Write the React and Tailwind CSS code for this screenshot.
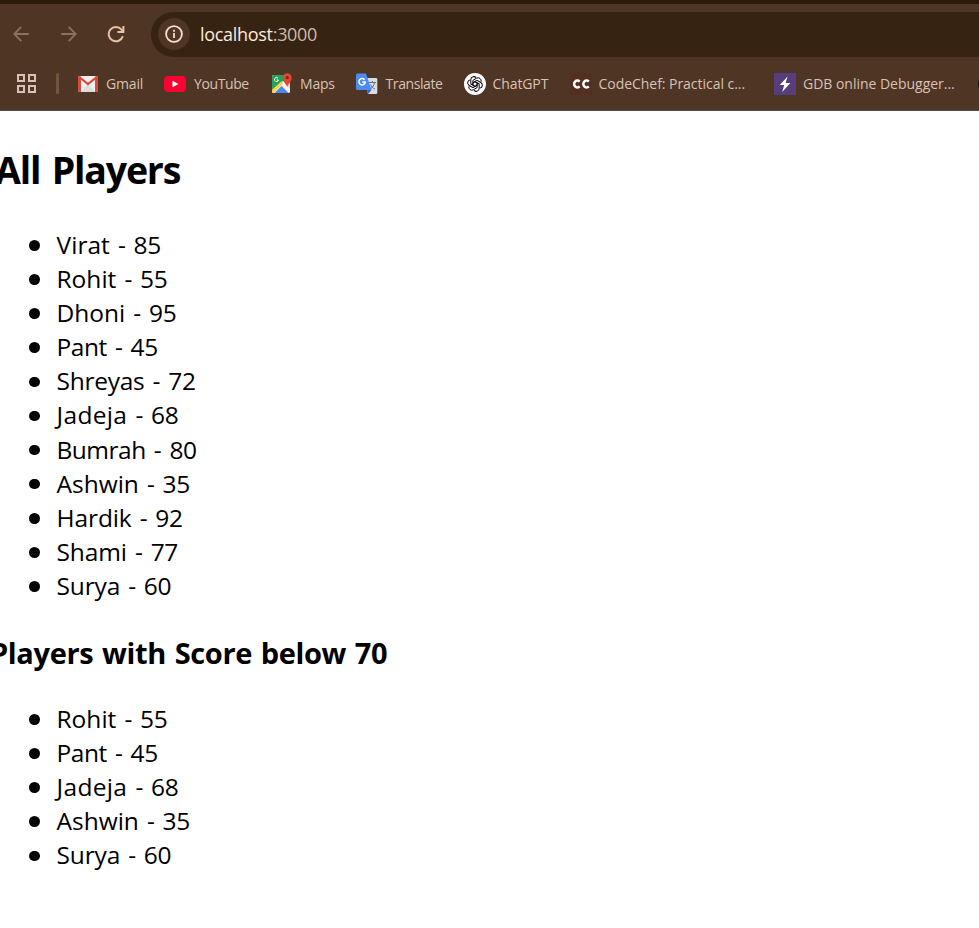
import React from "react";

const allPlayers = [
  ["Virat", 85, "tracking-[0.05px]"],
  ["Rohit", 55, "tracking-[0px]"],
  ["Dhoni", 95, "tracking-[0px]"],
  ["Pant", 45, "tracking-[-0.45px]"],
  ["Shreyas", 72, "tracking-[-0.25px]"],
  ["Jadeja", 68, "tracking-[0.35px]"],
  ["Bumrah", 80, "tracking-[-0.5px]"],
  ["Ashwin", 35, "tracking-[0px]"],
  ["Hardik", 92, "tracking-[-0.1px]"],
  ["Shami", 77, "tracking-[-0.1px]"],
  ["Surya", 60, "tracking-[-0.15px]"],
];

function PlayerList({ players }) {
  return (
    <ul>
      {players.map(([name, score, tracking]) => (
        <li key={name} className="flex h-[34.13px] items-center pl-[29px]">
          <span className="mt-px size-[10.5px] shrink-0 rounded-full bg-black" />
          <span className="ml-[17px] whitespace-pre text-[24.5px] leading-[34px] tracking-[-0.3px] [word-spacing:2px]">
            <span className={tracking}>{name}</span>
            {` - ${score}`}
          </span>
        </li>
      ))}
    </ul>
  );
}

function ArrowIcon({ flip }) {
  return (
    <svg className={`mb-px h-4 w-4 shrink-0 ${flip ? "-scale-x-100" : ""}`} viewBox="0 0 16 16" fill="none" stroke="#8c7161" strokeWidth="1.8">
      <path d="M15.8 8H1.5M8.3 .9L1.2 8l7.1 7.1" />
    </svg>
  );
}

function ReloadIcon() {
  return (
    <svg className="mb-px h-[18px] w-[18px] shrink-0" viewBox="0 0 18 18" fill="none" stroke="#e8c3a3" strokeWidth="2">
      <path d="M15.8 11.2A7.2 7.2 0 1 1 14.5 4.6L16 6.2" />
      <path d="M16.4 1v6h-6" />
    </svg>
  );
}

function InfoIcon() {
  return (
    <svg className="h-[18px] w-[18px]" viewBox="0 0 18 18" fill="none" stroke="#f6dfcf" strokeWidth="1.8">
      <circle cx="9" cy="9" r="7.9" />
      <path d="M9 8v5M9 4.7v2" />
    </svg>
  );
}

function AppsIcon() {
  return (
    <svg className="mb-[2px] h-[19px] w-[19px] shrink-0" viewBox="0 0 19 19" fill="none" stroke="#d8c2b5" strokeWidth="2">
      <path d="M1 1h6v6H1zM12 1h6v6h-6zM1 12h6v6H1zM12 12h6v6h-6z" />
    </svg>
  );
}

function GmailIcon() {
  return (
    <svg className="h-4 w-5 shrink-0" viewBox="0 0 20 16">
      <rect width="20" height="16" rx="1.5" fill="#efefef" />
      <path d="M3 16l7-8 7 8z" fill="#dcdcdc" />
      <path d="M0 1.5A1.5 1.5 0 0 1 1.5 0L3 1v15H1.5A1.5 1.5 0 0 1 0 14.5zM20 1.5A1.5 1.5 0 0 0 18.5 0L17 1v15h1.5a1.5 1.5 0 0 0 1.5-1.5z" fill="#d54b3d" />
      <path d="M1.2 1L10 8l8.8-7" fill="none" stroke="#d9483b" strokeWidth="2.2" />
    </svg>
  );
}

function YouTubeIcon() {
  return (
    <svg className="h-4 w-[22px] shrink-0" viewBox="0 0 22 16">
      <rect width="22" height="16" rx="4" fill="#ff0033" />
      <path d="M8.5 4.8v6.4l6-3.2z" fill="#fff" />
    </svg>
  );
}

function MapsIcon() {
  return (
    <svg className="mb-px h-[21px] w-5 shrink-0" viewBox="0 0 20 21">
      <rect y="2" width="18" height="18" rx="1.5" fill="#e8eaec" />
      <path d="M0 3.5A1.5 1.5 0 0 1 1.5 2H12v6L0 18z" fill="#25a35a" />
      <path d="M0 18L11 8l7 8v3L9 10.5 1 20z" fill="#f5f5f5" />
      <path d="M0 16.8L9.4 8.5l1.7 1.7L1.6 20A1.5 1.5 0 0 1 0 18.5z" fill="#fdd446" />
      <path d="M2.7 20l6.8-7 7 7z" fill="#4b87f3" />
      <path d="M12.5 9l5.5 7V8z" fill="#d4d7da" />
      <path d="M5.9 5.2A2 2 0 1 0 6.4 7H4.7" fill="none" stroke="#fff" strokeWidth="1" />
      <path d="M15.2 14.5c-.5-3.5-4.5-5.4-4.5-9.7a4.5 4.5 0 0 1 9 0c0 4.3-4 6.2-4.5 9.7z" fill="#e34537" />
      <circle cx="15.2" cy="4.7" r="1.6" fill="#84251f" />
    </svg>
  );
}

function TranslateIcon() {
  return (
    <svg className="h-[22px] w-[22px] shrink-0" viewBox="0 0 22 22">
      <path d="M8 5h12a1.3 1.3 0 0 1 1.3 1.3v13.4A1.3 1.3 0 0 1 20 21h-8z" fill="#dadcdf" />
      <path d="M11 17h4.5L12 21z" fill="#3662c8" />
      <path d="M1.5.5H10L15.5 17h-14A1.5 1.5 0 0 1 0 15.5V2A1.5 1.5 0 0 1 1.5.5z" fill="#4c8bf5" />
      <path d="M8.6 6.7A3.2 3.2 0 1 0 9.3 9H6.2" fill="none" stroke="#fff" strokeWidth="1.5" />
      <path d="M13 9.5h7M16.3 8v1.5M18.5 9.5c-.5 3-2 5-4 6.5M14.5 11.5c.8 2 2.3 3.5 4.5 4.7" fill="none" stroke="#627078" />
    </svg>
  );
}

function ChatGptIcon() {
  return (
    <svg className="h-[22px] w-[22px] shrink-0" viewBox="0 0 22 22">
      <circle cx="11" cy="11" r="11" fill="#fff" />
      <g fill="none" stroke="#000" strokeWidth="1" strokeLinejoin="round">
        {[0, 60, 120, 180, 240, 300].map((angle) => (
          <path key={angle} transform={`rotate(${angle} 11 11)`} d="M8.9 12.2V7.4L12.6 5.2a3.1 3.1 0 0 1 4.5 3.5M8.9 9.8L11 8.6" />
        ))}
      </g>
    </svg>
  );
}

function CodeChefIcon() {
  return (
    <span className="flex h-[22px] w-[22px] shrink-0 items-center justify-center bg-[#532f20]">
      <svg className="mr-px h-2.5 w-[18px]" viewBox="0 0 18 10" fill="none" stroke="#fff" strokeWidth="2.5">
        <path d="M7.6 2.6A3.2 3.4 0 1 0 7.6 7.4M16.8 2.6A3.2 3.4 0 1 0 16.8 7.4" />
      </svg>
    </span>
  );
}

function GdbIcon() {
  return (
    <svg className="h-[22px] w-[22px] shrink-0" viewBox="0 0 22 22">
      <rect width="22" height="22" fill="#563d7c" />
      <path d="M13.5 3.5L5.8 12h4.4l-2 7 8.2-9h-4.7z" fill="#fff" />
    </svg>
  );
}

const bookmarks = [
  { label: "Gmail", Icon: GmailIcon, box: "w-[86px]", gap: "gap-2", tracking: "tracking-[-0.15px]" },
  { label: "YouTube", Icon: YouTubeIcon, box: "w-[108px]", gap: "gap-2", tracking: "tracking-[-0.4px]" },
  { label: "Maps", Icon: MapsIcon, box: "w-[84px]", gap: "gap-2", tracking: "tracking-[-0.2px]" },
  { label: "Translate", Icon: TranslateIcon, box: "w-[108px]", gap: "gap-[7.5px]", tracking: "tracking-[-0.4px]" },
  { label: "ChatGPT", Icon: ChatGptIcon, box: "w-[106px]", gap: "gap-[6.5px]", tracking: "tracking-[-0.1px]" },
  { label: "CodeChef: Practical c...", Icon: CodeChefIcon, box: "w-[204px]", gap: "gap-[6.5px]", tracking: "tracking-[-0.04px]" },
  { label: "GDB online Debugger...", Icon: GdbIcon, box: "w-[203px]", gap: "gap-[7px]", tracking: "tracking-[-0.02px]" },
];

export default function App() {
  return (
    <div className="h-[928px] w-[979px] overflow-hidden bg-white font-['Open_Sans','Noto_Sans',sans-serif] text-black">
      <header className="h-[111px] overflow-hidden border-b border-[#5b4a40] bg-[#4e3524]">
        <div className="h-1 bg-[#2d1b09]" />
        <div className="flex h-[61px] items-center pl-[13px]">
          <ArrowIcon />
          <span className="w-8 shrink-0" />
          <ArrowIcon flip />
          <span className="w-[30px] shrink-0" />
          <ReloadIcon />
          <div className="ml-[26px] flex h-[45px] flex-1 items-center rounded-l-full bg-[#362311] pl-[7px]">
            <span className="mb-px flex size-8 items-center justify-center rounded-full bg-[#4e3524]">
              <InfoIcon />
            </span>
            <span className="mb-0.5 ml-[10px] text-[18px] leading-none tracking-[-0.3px] text-[#ffeadc]">
              localhost<span className="text-[#cdb9aa]">:3000</span>
            </span>
          </div>
        </div>
        <nav className="flex h-[38px] items-center overflow-hidden pl-[17px]">
          <AppsIcon />
          <span className="mb-px ml-5 h-[21px] w-[3px] shrink-0 rounded-full bg-[#70543b]" />
          <span className="w-[19px] shrink-0" />
          {bookmarks.map(({ label, Icon, box, gap, tracking }) => (
            <div key={label} className={`flex shrink-0 items-center whitespace-nowrap ${box} ${gap}`}>
              <Icon />
              <span className={`text-[14px] leading-5 text-[#d8c2b5] ${tracking}`}>{label}</span>
            </div>
          ))}
          <span className="ml-px size-[22px] shrink-0 rounded-full bg-[#111416]" />
        </nav>
      </header>
      <main>
        <h2 className="-ml-[5px] pt-[33px] text-[37.5px] font-bold leading-[52px] tracking-[-1.2px] [word-spacing:3px]">All Players</h2>
        <div className="pt-[31.8px]">
          <PlayerList players={allPlayers} />
        </div>
        <h3 className="-ml-[10px] pt-[30.2px] text-[29px] font-bold leading-[40px] tracking-[-0.35px] [word-spacing:1.5px]">
          Players with Score below 70
        </h3>
        <div className="pt-[28.4px]">
          <PlayerList players={allPlayers.filter(([, score]) => score < 70)} />
        </div>
      </main>
    </div>
  );
}
